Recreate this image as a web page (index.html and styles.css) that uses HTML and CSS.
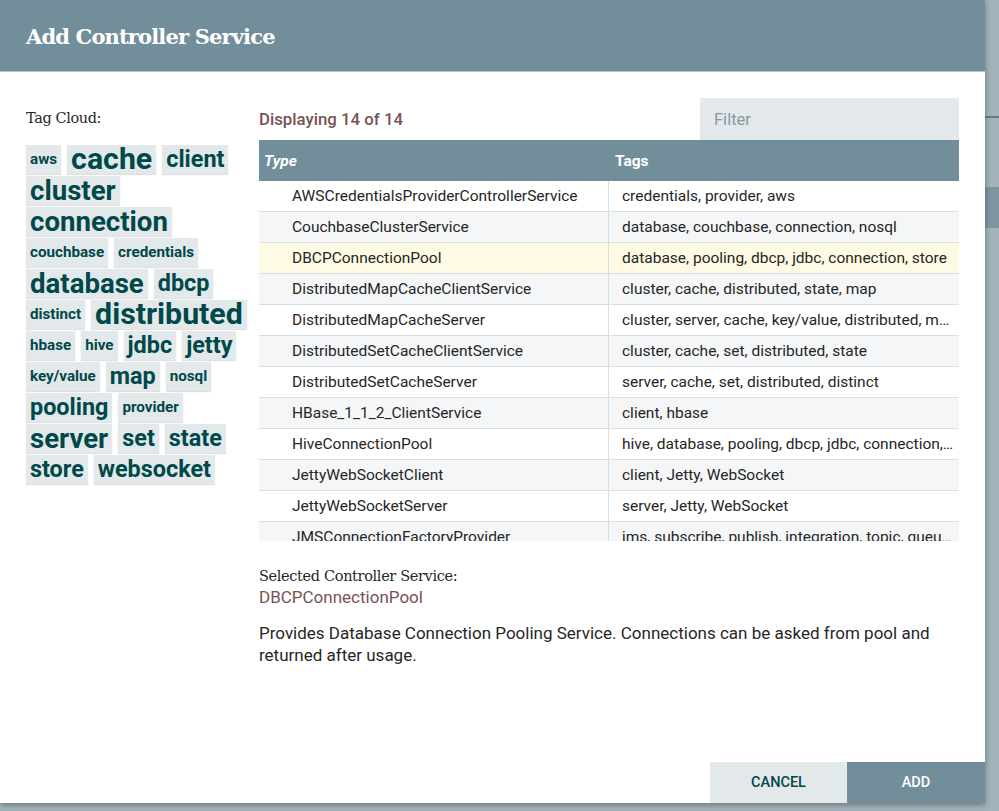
FILE: index.html
```html
<!DOCTYPE html>
<html lang="en">
<head>
<meta charset="utf-8">
<title>Add Controller Service</title>
<link rel="stylesheet" href="styles.css">
</head>
<body>
<div class="dialog">
  <div class="dialog-header">
    <h1 class="dialog-title">Add Controller Service</h1>
  </div>
  <div class="dialog-body">
    <aside class="tag-panel">
      <div class="tag-label">Tag Cloud:</div>
      <ul class="tag-cloud">
        <li class="tag t1">aws</li>
        <li class="tag t4">cache</li>
        <li class="tag t2">client</li>
        <li class="tag t3">cluster</li>
        <li class="tag t3">connection</li>
        <li class="tag t1">couchbase</li>
        <li class="tag t1">credentials</li>
        <li class="tag t3">database</li>
        <li class="tag t2">dbcp</li>
        <li class="tag t1">distinct</li>
        <li class="tag t4">distributed</li>
        <li class="tag t1">hbase</li>
        <li class="tag t1">hive</li>
        <li class="tag t2">jdbc</li>
        <li class="tag t2">jetty</li>
        <li class="tag t1">key/value</li>
        <li class="tag t2">map</li>
        <li class="tag t1">nosql</li>
        <li class="tag t2">pooling</li>
        <li class="tag t1">provider</li>
        <li class="tag t3">server</li>
        <li class="tag t2">set</li>
        <li class="tag t2">state</li>
        <li class="tag t2">store</li>
        <li class="tag t2">websocket</li>
      </ul>
    </aside>
    <section class="main-panel">
      <div class="toolbar">
        <div class="count">Displaying 14 of 14</div>
        <input class="filter" type="text" placeholder="Filter">
      </div>
      <div class="grid">
        <div class="grid-head">
          <div class="hcell hcell-type">Type</div>
          <div class="hcell hcell-tags">Tags</div>
        </div>
        <div class="grid-viewport">
          <div class="row"><div class="cell type">AWSCredentialsProviderControllerService</div><div class="cell tags">credentials, provider, aws</div></div>
          <div class="row alt"><div class="cell type">CouchbaseClusterService</div><div class="cell tags">database, couchbase, connection, nosql</div></div>
          <div class="row selected"><div class="cell type">DBCPConnectionPool</div><div class="cell tags">database, pooling, dbcp, jdbc, connection, store</div></div>
          <div class="row alt"><div class="cell type">DistributedMapCacheClientService</div><div class="cell tags">cluster, cache, distributed, state, map</div></div>
          <div class="row"><div class="cell type">DistributedMapCacheServer</div><div class="cell tags">cluster, server, cache, key/value, distributed, map</div></div>
          <div class="row alt"><div class="cell type">DistributedSetCacheClientService</div><div class="cell tags">cluster, cache, set, distributed, state</div></div>
          <div class="row"><div class="cell type">DistributedSetCacheServer</div><div class="cell tags">server, cache, set, distributed, distinct</div></div>
          <div class="row alt"><div class="cell type">HBase_1_1_2_ClientService</div><div class="cell tags">client, hbase</div></div>
          <div class="row"><div class="cell type">HiveConnectionPool</div><div class="cell tags">hive, database, pooling, dbcp, jdbc, connection, store</div></div>
          <div class="row alt"><div class="cell type">JettyWebSocketClient</div><div class="cell tags">client, Jetty, WebSocket</div></div>
          <div class="row"><div class="cell type">JettyWebSocketServer</div><div class="cell tags">server, Jetty, WebSocket</div></div>
          <div class="row alt"><div class="cell type">JMSConnectionFactoryProvider</div><div class="cell tags">jms, subscribe, publish, integration, topic, queue, messaging</div></div>
          <div class="row"><div class="cell type">StandardHttpContextMap</div><div class="cell tags">http, request, response</div></div>
          <div class="row alt"><div class="cell type">StandardSSLContextService</div><div class="cell tags">ssl, secure, certificate, keystore, truststore, jks</div></div>
        </div>
      </div>
      <div class="selected-info">
        <div class="selected-label">Selected Controller Service:</div>
        <div class="selected-name">DBCPConnectionPool</div>
        <p class="selected-desc">Provides Database Connection Pooling Service. Connections can be asked from pool and returned after usage.</p>
      </div>
    </section>
  </div>
  <div class="dialog-footer">
    <button class="btn btn-cancel" type="button">CANCEL</button>
    <button class="btn btn-add" type="button">ADD</button>
  </div>
</div>
<div class="backdrop-side">
  <div class="side-line"></div>
  <div class="side-block"></div>
</div>
</body>
</html>
```

FILE: styles.css
```css
* { box-sizing: border-box; }

html, body {
  margin: 0;
  height: 100%;
}

body {
  background: #a3b4bd;
  font-family: Roboto, "Liberation Sans", sans-serif;
  color: #262626;
  display: flex;
  align-items: flex-start;
  overflow: hidden;
}

.dialog {
  flex: none;
  width: 985px;
  height: 803px;
  background: #fff;
  box-shadow: 0 2px 6px rgba(0, 0, 0, 0.35);
  display: flex;
  flex-direction: column;
  position: relative;
  z-index: 1;
}

.dialog-header {
  flex: none;
  height: 72px;
  background: #728e9b;
  border-bottom: 1px solid #b6c5cc;
  padding: 0 26px;
  display: flex;
  align-items: center;
}

.dialog-title {
  margin: 0;
  font-family: "DejaVu Serif", serif;
  font-weight: bold;
  font-size: 21px;
  letter-spacing: -0.85px;
  color: #fff;
  padding-top: 2px;
}

.dialog-body {
  flex: 1;
  display: grid;
  grid-template-columns: 226px 1fr;
  column-gap: 7px;
  padding: 26px 26px 0;
  min-height: 0;
}

/* Tag cloud */
.tag-panel {
  min-width: 0;
}

.tag-label {
  margin-top: 10px;
  line-height: 20px;
  font-family: "DejaVu Serif", serif;
  font-size: 14.5px;
  letter-spacing: -0.4px;
  color: #262626;
}

.tag-cloud {
  list-style: none;
  margin: 17px 0 0;
  padding: 0;
  width: 230px;
  display: flex;
  flex-wrap: wrap;
  column-gap: 6px;
  row-gap: 2px;
}

.tag {
  height: 29px;
  padding: 0 4px;
  display: flex;
  align-items: center;
  background: #e3e8eb;
  box-shadow: 0 1px 1px rgba(0, 0, 0, 0.12);
  color: #004849;
  font-weight: bold;
  white-space: nowrap;
  line-height: 1;
}

.t1 { font-size: 15.2px; }
.t2 { font-size: 23.4px; }
.t3 { font-size: 27.6px; }
.t4 { font-size: 30.3px; }

/* Main panel */
.main-panel {
  min-width: 0;
  display: flex;
  flex-direction: column;
}

.toolbar {
  height: 42px;
  display: flex;
  align-items: center;
  justify-content: space-between;
}

.count {
  color: #775351;
  font-size: 16.8px;
  font-weight: 500;
}

.filter {
  width: 259px;
  height: 42px;
  border: none;
  background: #e3e8eb;
  padding: 0 14px;
  font-family: Roboto, sans-serif;
  font-size: 16.5px;
  color: #262626;
  outline: none;
}

.filter::placeholder { color: #8899a3; }

.grid-head {
  height: 41px;
  background: #728e9b;
  display: grid;
  grid-template-columns: 351px 1fr;
  align-items: center;
  color: #fff;
  font-weight: bold;
  font-size: 15.5px;
}

.hcell { padding-left: 5px; }
.hcell-type { font-style: italic; }
.hcell-tags { padding-left: 5px; }

.grid-viewport {
  height: 360px;
  overflow: hidden;
}

.row {
  height: 31px;
  display: grid;
  grid-template-columns: 350px 1fr;
  background: #fff;
  border-bottom: 1px solid #d7dfe3;
  font-size: 15.5px;
  color: #262626;
}

.row.alt { background: #f4f6f7; }
.row.selected { background: #fffae3; }

.cell {
  display: flex;
  align-items: center;
  white-space: nowrap;
  overflow: hidden;
}

.cell.type {
  padding-left: 33px;
  border-right: 1px solid #d7dfe3;
}

.cell.tags {
  padding: 0 4px 0 13px;
  display: block;
  line-height: 30px;
  text-overflow: ellipsis;
}

.selected-info {
  margin-top: 25px;
}

.selected-label {
  font-family: "DejaVu Serif", serif;
  font-size: 14.5px;
  letter-spacing: -0.35px;
  line-height: 21px;
  color: #262626;
}

.selected-name {
  font-size: 17px;
  line-height: 21px;
  color: #775351;
}

.selected-desc {
  margin: 14px 0 0;
  font-size: 17px;
  line-height: 22px;
  color: #262626;
}

/* Footer */
.dialog-footer {
  flex: none;
  display: flex;
  justify-content: flex-end;
}

.btn {
  width: 137px;
  height: 41px;
  border: none;
  font-family: Roboto, sans-serif;
  font-size: 14.5px;
  font-weight: 500;
  cursor: pointer;
}

.btn-cancel {
  background: #e3e8eb;
  color: #004849;
}

.btn-add {
  width: 138px;
  background: #728e9b;
  color: #fff;
}

/* Backdrop underneath (visible strip right of dialog) */
.backdrop-side {
  flex: 1;
  display: flex;
  flex-direction: column;
}

.side-line {
  margin-top: 116px;
  height: 2px;
  background: #5f7f8c;
}

.side-block {
  margin-top: 69px;
  height: 41px;
  background: #7d96a2;
}
```
